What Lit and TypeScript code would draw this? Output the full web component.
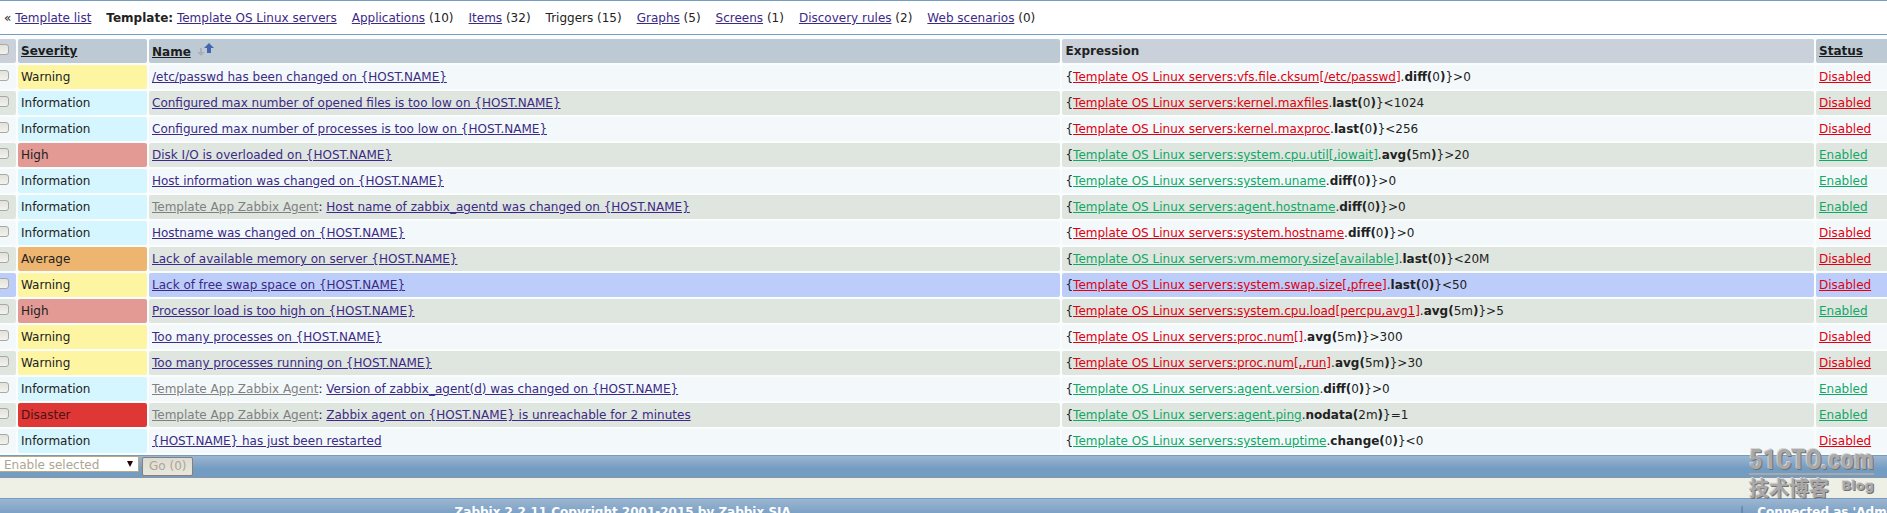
import { LitElement, html, css, svg } from "lit";
import { customElement } from "lit/decorators.js";

type Severity = "warning" | "information" | "high" | "average" | "disaster";

interface Trigger {
  severity: Severity;
  parent?: string;
  name: string;
  key: string;
  keyOk: boolean;
  fn: string;
  arg: string;
  tail: string;
  enabled: boolean;
  hovered?: boolean;
}

const AGENT = "Template App Zabbix Agent";
const HOST = "{HOST.NAME}";

const TABS = [
  { label: "Applications", count: 10 },
  { label: "Items", count: 32 },
  { label: "Triggers", count: 15, current: true },
  { label: "Graphs", count: 5 },
  { label: "Screens", count: 1 },
  { label: "Discovery rules", count: 2 },
  { label: "Web scenarios", count: 0 },
];

const TRIGGERS: Trigger[] = [
  { severity: "warning", name: `/etc/passwd has been changed on ${HOST}`, key: "vfs.file.cksum[/etc/passwd]", keyOk: false, fn: "diff", arg: "0", tail: ">0", enabled: false },
  { severity: "information", name: `Configured max number of opened files is too low on ${HOST}`, key: "kernel.maxfiles", keyOk: false, fn: "last", arg: "0", tail: "<1024", enabled: false },
  { severity: "information", name: `Configured max number of processes is too low on ${HOST}`, key: "kernel.maxproc", keyOk: false, fn: "last", arg: "0", tail: "<256", enabled: false },
  { severity: "high", name: `Disk I/O is overloaded on ${HOST}`, key: "system.cpu.util[,iowait]", keyOk: true, fn: "avg", arg: "5m", tail: ">20", enabled: true },
  { severity: "information", name: `Host information was changed on ${HOST}`, key: "system.uname", keyOk: true, fn: "diff", arg: "0", tail: ">0", enabled: true },
  { severity: "information", parent: AGENT, name: `Host name of zabbix_agentd was changed on ${HOST}`, key: "agent.hostname", keyOk: true, fn: "diff", arg: "0", tail: ">0", enabled: true },
  { severity: "information", name: `Hostname was changed on ${HOST}`, key: "system.hostname", keyOk: false, fn: "diff", arg: "0", tail: ">0", enabled: false },
  { severity: "average", name: `Lack of available memory on server ${HOST}`, key: "vm.memory.size[available]", keyOk: true, fn: "last", arg: "0", tail: "<20M", enabled: false },
  { severity: "warning", name: `Lack of free swap space on ${HOST}`, key: "system.swap.size[,pfree]", keyOk: false, fn: "last", arg: "0", tail: "<50", enabled: false, hovered: true },
  { severity: "high", name: `Processor load is too high on ${HOST}`, key: "system.cpu.load[percpu,avg1]", keyOk: false, fn: "avg", arg: "5m", tail: ">5", enabled: true },
  { severity: "warning", name: `Too many processes on ${HOST}`, key: "proc.num[]", keyOk: false, fn: "avg", arg: "5m", tail: ">300", enabled: false },
  { severity: "warning", name: `Too many processes running on ${HOST}`, key: "proc.num[,,run]", keyOk: false, fn: "avg", arg: "5m", tail: ">30", enabled: false },
  { severity: "information", parent: AGENT, name: `Version of zabbix_agent(d) was changed on ${HOST}`, key: "agent.version", keyOk: true, fn: "diff", arg: "0", tail: ">0", enabled: true },
  { severity: "disaster", parent: AGENT, name: `Zabbix agent on ${HOST} is unreachable for 2 minutes`, key: "agent.ping", keyOk: true, fn: "nodata", arg: "2m", tail: "=1", enabled: true },
  { severity: "information", name: `${HOST} has just been restarted`, key: "system.uptime", keyOk: true, fn: "change", arg: "0", tail: "<0", enabled: false },
];

const capitalize = (s: string) => s[0].toUpperCase() + s.slice(1);

@customElement("app-root")
export class AppRoot extends LitElement {
  static styles = css`
    :host {
      display: block;
      position: relative;
      height: 100vh;
      overflow: hidden;
      background: #fff;
      color: #222;
      font: 12px/16px "DejaVu Sans", Verdana, sans-serif;
    }
    a { color: #3c2a86; }
    .tabs {
      display: flex;
      gap: 15px;
      padding: 9px 4px 8px;
      border-top: 1px solid #759dc4;
      border-bottom: 1px solid #759dc4;
      white-space: nowrap;
    }
    .body { background: #fbfdfd; padding-top: 2px; }
    table {
      width: calc(100% + 16px);
      margin: 0 -8px;
      border-spacing: 2px;
      table-layout: fixed;
    }
    .c-check { width: 22px; }
    .c-sev { width: 129px; }
    .c-name { width: 48.2%; }
    .c-status { width: 77px; }
    th, td {
      height: 24px;
      box-sizing: border-box;
      padding: 0 3px;
      text-align: left;
      border-radius: 2px;
      white-space: nowrap;
      overflow: hidden;
    }
    th { background: #cad1da; }
    th a { color: #1c1c1c; }
    th.sortable { background: #bdcad4; }
    td { background: #f3f9fb; }
    tr:nth-child(even) td { background: #dfe5df; }
    tr.hovered td { background: #bccdfa; }
    tr td.warning, tr:nth-child(even) td.warning { background: #fdf5a2; }
    tr td.information, tr:nth-child(even) td.information { background: #d5f5ff; }
    tr:nth-child(even) td.high { background: #e39a95; }
    tr:nth-child(even) td.average { background: #edb56f; }
    tr:nth-child(even) td.disaster { background: #df3736; color: #4a1212; }
    .arrows { margin-left: 6px; vertical-align: -1px; }
    .tick {
      appearance: none;
      display: block;
      width: 13px;
      height: 11px;
      margin: 0 0 4px -1px;
      border: 1px solid #aaa89f;
      border-radius: 3px;
      background: linear-gradient(#e2e2dc, #f2f2ee);
    }
    a.parent { color: #808080; }
    a.off { color: #e0000f; }
    a.on { color: #10a866; }
    .actions {
      display: flex;
      align-items: flex-start;
      gap: 3px;
      height: 23px;
      box-sizing: border-box;
      border-top: 1px solid #759dc4;
      border-bottom: 1px solid #8a94a4;
      background: linear-gradient(#9db6d0, #739cc3 60%);
    }
    .picker { position: relative; }
    select, button {
      box-sizing: border-box;
      font: inherit;
      color: #aea592;
    }
    select {
      appearance: none;
      display: block;
      width: 139px;
      height: 16px;
      padding: 0 4px;
      border: 1px solid #b8aa80;
      border-left: 0;
      background: #fff;
      opacity: 1;
    }
    .caret {
      position: absolute;
      right: 6px;
      top: 5px;
      width: 6px;
      height: 6px;
      pointer-events: none;
    }
    button {
      height: 19px;
      margin-top: 1px;
      padding: 0 6px;
      line-height: 17px;
      border: 1px solid #868078;
      border-radius: 2px;
      background: linear-gradient(#dcdcd4, #e9e7dd);
    }
    .gap { height: 20px; background: #eef0e6; }
    .footer {
      display: flex;
      border-top: 1px solid #759dc4;
      background: linear-gradient(#9db6d0, #739cc3 60%);
      color: #fff;
      font-weight: bold;
      white-space: nowrap;
      height: 24px;
      padding-top: 5px;
    }
    .copyright { flex: 0 0 66%; text-align: center; }
    .session { flex: 1; text-align: right; margin-right: -16px; }
    .bar { color: #5b7796; font-weight: normal; margin-right: 13px; }
    .mark {
      position: absolute;
      right: 13px;
      bottom: 12px;
      width: 125px;
      color: #a9a9a9;
      font-weight: bold;
      text-shadow: 1px 1px 0 #76706e, -1px -1px 0 #d6d6d6;
    }
    .site {
      font: bold 27px/26px "Liberation Sans Narrow", "Roboto Condensed", "Liberation Sans", sans-serif;
      border-bottom: 2px solid #a9a9a9;
    }
    .sub { display: flex; justify-content: space-between; }
    .cn { font: bold 20px/26px "Noto Sans CJK SC", sans-serif; }
    .en { font: bold 13px/22px "DejaVu Sans", sans-serif; }
  `;

  private row(t: Trigger) {
    return html`<tr class=${t.hovered ? "hovered" : ""}>
      <td><input class="tick" type="checkbox" aria-label=${t.name} /></td>
      <td class=${t.severity}>${capitalize(t.severity)}</td>
      <td>${t.parent ? html`<a class="parent" href="#">${t.parent}</a>: ` : ""}<a href="#">${t.name}</a></td>
      <td>{<a class=${t.keyOk ? "on" : "off"} href="#">Template OS Linux servers:${t.key}</a>.<b>${t.fn}(</b>${t.arg}<b>)</b>}${t.tail}</td>
      <td><a class=${t.enabled ? "on" : "off"} href="#">${t.enabled ? "Enabled" : "Disabled"}</a></td>
    </tr>`;
  }

  private arrows() {
    return html`<svg class="arrows" width="17" height="14" viewBox="0 0 17 14" aria-hidden="true">
      ${svg`<path d="M3 5h2v4h3l-4 4-4-4h3z" fill="#aab0b6"/>
      <path d="M12 0l5 5h-3v5h-4V5H7z" fill="#4466ae"/>`}
    </svg>`;
  }

  render() {
    return html`
      <nav class="tabs">
        <span>« <a href="#">Template list</a></span>
        <span><b>Template:</b> <a href="#">Template OS Linux servers</a></span>
        ${TABS.map((t) => html`<span>${t.current ? t.label : html`<a href="#">${t.label}</a>`} (${t.count})</span>`)}
      </nav>
      <main class="body">
        <table>
          <colgroup>
            <col class="c-check" /><col class="c-sev" /><col class="c-name" /><col /><col class="c-status" />
          </colgroup>
          <thead>
            <tr>
              <th><input class="tick" type="checkbox" aria-label="Select all triggers" /></th>
              <th class="sortable"><a href="#">Severity</a></th>
              <th class="sortable"><a href="#">Name</a>${this.arrows()}</th>
              <th>Expression</th>
              <th class="sortable"><a href="#">Status</a></th>
            </tr>
          </thead>
          <tbody>${TRIGGERS.map((t) => this.row(t))}</tbody>
        </table>
      </main>
      <div class="actions">
        <div class="picker">
          <select aria-label="Action" disabled><option>Enable selected</option></select>
          <svg class="caret" viewBox="0 0 6 6" aria-hidden="true"><path d="M0 0h6L3 6z" fill="#200"/></svg>
        </div>
        <button type="button" disabled>Go (0)</button>
      </div>
      <div class="gap"></div>
      <footer class="footer">
        <span class="copyright">Zabbix 2.2.11 Copyright 2001-2015 by Zabbix SIA</span>
        <span class="session"><span class="bar">|</span>Connected as 'Admin'</span>
      </footer>
      <div class="mark">
        <div class="site">51CTO.com</div>
        <div class="sub"><span class="cn">技术博客</span><span class="en">Blog</span></div>
      </div>
    `;
  }
}
